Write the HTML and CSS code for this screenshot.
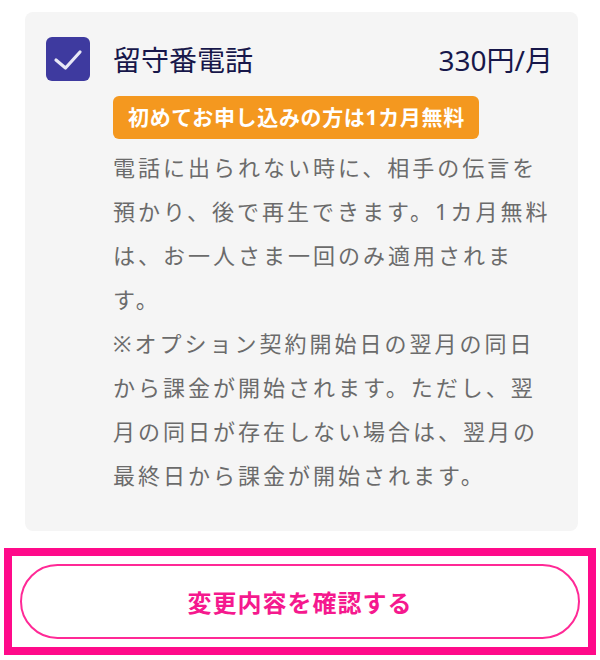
FILE: index.html
```html
<!DOCTYPE html>
<html lang="ja">
<head>
    <meta charset="UTF-8">
    <meta name="viewport" content="width=device-width, initial-scale=1.0">
    <title>オプション変更</title>
    <link rel="stylesheet" href="styles.css">
</head>
<body>
    <div class="option-card">
        <div class="option-head">
            <span class="check-box">
                <svg width="44" height="44" viewBox="0 0 44 44">
                    <path d="M10 23 L19.5 31 L34 15" fill="none" stroke="#e8e8f6" stroke-width="3.2" stroke-linecap="round" stroke-linejoin="round"/>
                </svg>
            </span>
            <span class="option-name">留守番電話</span>
            <span class="option-price">330円/月</span>
        </div>
        <div class="option-body">
            <span class="campaign">初めてお申し込みの方は1カ月無料</span>
            <p class="option-desc">電話に出られない時に、相手の伝言を預かり、後で再生できます。1カ月無料は、お一人さま一回のみ適用されます。<br>※オプション契約開始日の翌月の同日から課金が開始されます。ただし、翌月の同日が存在しない場合は、翌月の最終日から課金が開始されます。</p>
        </div>
    </div>

    <div class="confirm-area">
        <button class="confirm-btn">変更内容を確認する</button>
    </div>
</body>
</html>
```

FILE: styles.css
```css
body {
    margin: 12px 4px 0 4px;
    background-color: #fff;
    font-family: "Noto Sans", "Noto Sans CJK JP", sans-serif;
}
.option-card {
    margin: 0 18px 0 21px;
    background-color: #f5f5f5;
    border-radius: 8px;
    padding: 25px 21px 34px 21px;
}
.option-head {
    display: flex;
    align-items: center;
    height: 44px;
}
.check-box {
    width: 44px;
    height: 44px;
    border-radius: 6px;
    background-color: #3e3a9f;
    display: flex;
    flex-shrink: 0;
}
.option-name {
    margin-left: 23px;
    font-size: 28px;
    color: #17174a;
    flex: 1;
}
.option-price {
    font-size: 28px;
    color: #17174a;
    margin-right: 4px;
}
.option-body {
    margin-left: 67px;
    margin-top: 15px;
}
.campaign {
    display: inline-block;
    background-color: #f4981f;
    color: #fff;
    font-weight: bold;
    font-size: 21px;
    letter-spacing: 0.65px;
    line-height: 33px;
    padding: 5px 14px 5px 15px;
    border-radius: 6px;
}
.option-desc {
    margin: 6px 0 0 0;
    font-size: 22px;
    letter-spacing: 3px;
    line-height: 44px;
    color: #6b6b6b;
}
.confirm-area {
    margin-top: 17px;
    border: 8px solid #ff0a8a;
    padding: 8px;
}
.confirm-btn {
    display: block;
    width: 100%;
    height: 75px;
    border: 2px solid #ff2996;
    border-radius: 38px;
    background-color: #fff;
    color: #f5198e;
    font-family: "Noto Sans CJK JP", sans-serif;
    font-size: 24px;
    font-weight: bold;
    letter-spacing: 1px;
    cursor: pointer;
}
```
